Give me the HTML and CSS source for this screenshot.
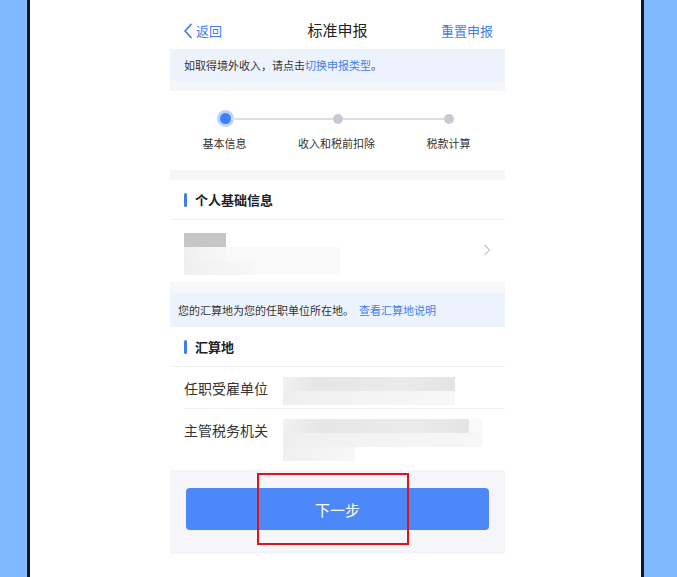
FILE: index.html
```html
<!DOCTYPE html>
<html lang="zh-CN">
<head>
  <meta charset="UTF-8" />
  <meta name="viewport" content="width=device-width, initial-scale=1.0"/>
  <title>标准申报</title>
  <link rel="stylesheet" href="styles.css">
</head>
<body>
  <div class="frame">
    <div class="phone">
      <header class="topbar">
        <a class="back">
          <svg width="10" height="16" viewBox="0 0 10 16"><path d="M8 1.5 L2 8 L8 14.5" fill="none" stroke="#3f7ef0" stroke-width="1.8" stroke-linecap="round" stroke-linejoin="round"/></svg>
          返回
        </a>
        <h1>标准申报</h1>
        <a class="reset">重置申报</a>
      </header>

      <div class="tip">如取得境外收入，请点击<span class="link">切换申报类型</span>。</div>
      <div class="gap"></div>

      <div class="steps">
        <div class="track">
          <span class="dot active"></span>
          <span class="line"></span>
          <span class="dot"></span>
          <span class="line"></span>
          <span class="dot"></span>
        </div>
        <div class="labels">
          <span>基本信息</span>
          <span>收入和税前扣除</span>
          <span>税款计算</span>
        </div>
      </div>
      <div class="gap"></div>

      <div class="section-title"><i></i>个人基础信息</div>
      <div class="person">
        <div class="mosaic">
          <div class="m-row"><b class="t3" style="width:42px"></b></div>
          <div class="m-row"><b class="t1" style="width:42px"></b><b class="t0" style="width:114px"></b></div>
          <div class="m-row"><b class="t1" style="width:70px"></b><b class="t0" style="width:86px"></b></div>
        </div>
        <svg class="chev" width="8" height="12" viewBox="0 0 8 12"><path d="M1.5 1 L6.5 6 L1.5 11" fill="none" stroke="#c8c8cc" stroke-width="1.2"/></svg>
      </div>
      <div class="gap small"></div>

      <div class="tip tall">您的汇算地为您的任职单位所在地。<span class="link">查看汇算地说明</span></div>

      <div class="section-title"><i></i>汇算地</div>
      <div class="fields">
        <div class="field">
          <span class="label">任职受雇单位</span>
          <div class="mosaic">
            <div class="m-row"><b class="t2" style="width:172px"></b></div>
            <div class="m-row"><b class="t1" style="width:172px"></b></div>
          </div>
        </div>
        <div class="field last">
          <span class="label">主管税务机关</span>
          <div class="mosaic">
            <div class="m-row"><b class="t2" style="width:186px"></b><b class="t0" style="width:14px"></b></div>
            <div class="m-row"><b class="t1" style="width:200px"></b></div>
            <div class="m-row"><b class="t1" style="width:72px"></b></div>
          </div>
        </div>
      </div>

      <div class="footer">
        <button class="next">下一步</button>
        <span class="mark"></span>
      </div>
    </div>
  </div>
</body>
</html>
```

FILE: styles.css
```css
body {
  margin: 0;
  background: #80b9fe;
  font-family: "Noto Sans CJK SC", "Noto Sans", sans-serif;
  color: #333;
}

.frame {
  margin-left: 27px;
  width: 611px;
  height: 577px;
  border-left: 3px solid #15171c;
  border-right: 3px solid #15171c;
  background: #fff;
  overflow: hidden;
}

.phone {
  position: relative;
  width: 335px;
  margin-left: 140px;
  background: #fff;
}

.topbar {
  height: 49px;
  display: flex;
  align-items: center;
  justify-content: space-between;
  padding: 0 12px 0 13px;
  position: relative;
}

.topbar h1 {
  position: absolute;
  left: 0;
  right: 0;
  margin: 0;
  text-align: center;
  font-size: 15px;
  font-weight: 400;
  color: #222;
  pointer-events: none;
  top: 20px;
  line-height: 20px;
}

.back, .reset {
  color: #3f7ef0;
  font-size: 13px;
  display: flex;
  align-items: center;
  gap: 3px;
  margin-top: 12px;
}

.tip {
  height: 32px;
  line-height: 32px;
  background: #edf3fd;
  font-size: 11px;
  color: #333;
  padding-left: 14px;
}

.tip.tall {
  height: 34px;
  line-height: 34px;
  padding-left: 8px;
}

.link {
  color: #3f7ef0;
}

.tip.tall .link {
  margin-left: 5px;
}

.gap {
  height: 10px;
  background: #f5f6f8;
}

.gap.small {
  height: 11px;
  background: #f7f7f9;
}

.steps {
  height: 79px;
  padding-top: 22px;
  box-sizing: border-box;
}

.track {
  display: flex;
  align-items: center;
  padding: 0 51px 0 50px;
}

.dot {
  width: 10px;
  height: 10px;
  border-radius: 50%;
  background: #c9c9d3;
  flex: none;
}

.dot.active {
  width: 11px;
  height: 11px;
  background: #3f80f6;
  box-shadow: 0 0 0 3px #bcd4fb;
}

.line {
  flex: 1;
  height: 2px;
  background: #dedee3;
}

.labels {
  display: grid;
  grid-template-columns: repeat(3, 112px);
  justify-content: center;
  margin: 11px 0 0 -2px;
  font-size: 11px;
  color: #333;
  text-align: center;
}

.section-title {
  height: 40px;
  display: flex;
  align-items: center;
  padding-left: 14px;
  font-size: 13px;
  font-weight: 700;
  color: #222;
  border-bottom: 1px solid #f0f0f2;
  box-sizing: border-box;
}

.section-title i {
  width: 3px;
  height: 14px;
  border-radius: 2px;
  background: #3f7ef0;
  margin-right: 8px;
}

.person {
  height: 62px;
  display: flex;
  align-items: flex-start;
  justify-content: space-between;
  padding: 13px 14px 0 14px;
  box-sizing: border-box;
}

.person .chev {
  margin-top: 11px;
}

.mosaic {
  display: flex;
  flex-direction: column;
}

.m-row {
  display: flex;
  height: 14px;
}

.m-row b {
  display: block;
  height: 100%;
}

.t0 { background: #f9f9f9; }
.t1 { background: linear-gradient(to right, #efefef, #f3f3f3 40%, #f7f7f7); }
.t2 { background: linear-gradient(to right, #f1f1f1, #e6e6e6 20%, #ebebeb 70%, #e4e4e4); }
.t3 { background: #c6c6c6; }

.fields {
  padding-left: 14px;
}

.field {
  display: flex;
  align-items: flex-start;
  height: 42px;
  padding-top: 10px;
  border-bottom: 1px solid #f0f0f2;
  box-sizing: border-box;
}

.field.last {
  border-bottom: none;
  height: 61px;
}

.field .label {
  width: 99px;
  font-size: 14px;
  color: #333;
  line-height: 22px;
  flex: none;
}

.footer {
  position: relative;
  height: 84px;
  background: #f5f6f9;
  padding: 18px 16px 0 16px;
  box-sizing: border-box;
}

.next {
  display: block;
  width: 100%;
  height: 42px;
  border: none;
  border-radius: 4px;
  background: #4c88f7;
  color: #fff;
  font-family: inherit;
  font-size: 15px;
}

.mark {
  position: absolute;
  left: 87px;
  top: 3px;
  width: 148px;
  height: 68px;
  border: 2px solid #e0121b;
}
```
